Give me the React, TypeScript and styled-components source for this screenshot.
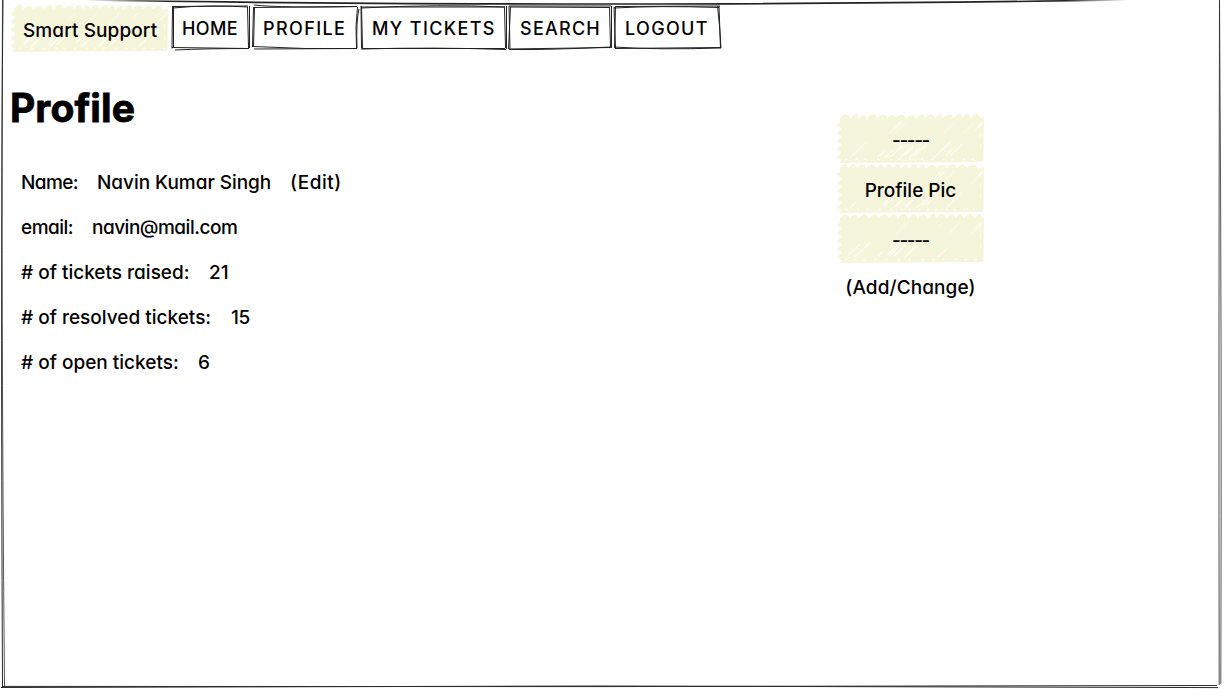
import React from 'react';
import styled, { createGlobalStyle } from 'styled-components';

const GlobalStyle = createGlobalStyle`
  * { box-sizing: border-box; }
  body {
    margin: 0;
    background: #fff;
    color: #000;
    font-family: Inter, "Liberation Sans", sans-serif;
    font-feature-settings: "cv11" 1, "ss03" 1;
    font-size: 19px;
    font-weight: 500;
  }
`;

const Page = styled.div`
  position: relative;
  width: 1229px;
  height: 696px;
  overflow: hidden;
  padding: 5px 0 0 10px;
`;

const Frame = styled.svg`
  position: absolute;
  inset: 0;
  pointer-events: none;
`;

const Sketch = styled.svg`
  position: absolute;
  left: 0;
  top: 0;
  overflow: visible;
`;

const Nav = styled.nav`
  display: flex;
  height: 46px;
`;

const Brand = styled.div`
  position: relative;
  width: 158px;
  padding-left: 13px;
  line-height: 51px;
  margin-right: 3px;
`;

const NavItem = styled.a<{ $w: number; $pad?: number }>`
  position: relative;
  width: ${p => p.$w}px;
  padding-left: ${p => p.$pad ?? 11}px;
  line-height: 47px;
  font-size: 18px;
`;

const Label = styled.span<{ $ls?: number }>`
  position: relative;
  white-space: pre;
  letter-spacing: ${p => p.$ls ?? 0}px;
`;

const Main = styled.main`
  display: flex;
`;

const Details = styled.section`
  width: 826px;
`;

const Title = styled.h1`
  margin: 32px 0 27px;
  font-size: 39px;
  line-height: 50px;
  height: 50px;
  font-weight: 700;
  -webkit-text-stroke: 0.8px #000;
`;

const Row = styled.div`
  display: flex;
  height: 45px;
  line-height: 45px;
  padding-left: 11px;
`;

const Cell = styled.div<{ $w: number }>`
  width: ${p => p.$w}px;
  flex: none;
`;

const Picture = styled.aside`
  width: 149px;
  padding-top: 63px;
  text-align: center;
`;

const Block = styled.div`
  position: relative;
  height: 50px;
  line-height: 53px;
`;

const Action = styled.div`
  line-height: 47px;
`;

function hatch(w: number, h: number, seed: number) {
  let s = seed;
  const rnd = () => {
    s = (s * 16807) % 2147483647;
    return s / 2147483647;
  };
  for (let i = 0; i < 5; i++) rnd();
  let outline = 'M4 4';
  let x = 4;
  while (x < w - 9) {
    const step = 7 + rnd() * 4;
    outline += ` Q${x + step * 0.7} ${-5 + rnd() * 2} ${x + step} ${4 + rnd()}`;
    x += step;
  }
  outline += ` L${w - 1} 3 L${w - 1.5} ${h - 3} L${w - 3} ${h - 1}`;
  outline += ` L3 ${h}`;
  let y = h - 1;
  while (y > 9) {
    outline += ` L${5 + rnd()} ${y - 2} Q-3 ${y - 5} ${4 + rnd()} ${y - 8}`;
    y -= 8;
  }
  outline += ' Z';
  const long: string[] = [];
  for (let i = 0; i < w / 14; i++) {
    const gx = 8 + rnd() * (w - 36);
    const gy = h - 5 - rnd() * 5;
    const l = 4 + rnd() * 14;
    long.push(`M${gx} ${gy} L${gx + l} ${gy - l * 0.95}`);
  }
  const short: string[] = [];
  for (let i = 0; i < w / 24; i++) {
    const gx = w * 0.3 + rnd() * (w * 0.7);
    const l = 5 + rnd() * 9;
    short.push(`M${Math.min(gx, w - l - 2)} ${8 + l} l${l} ${-l}`);
  }
  let notches = '';
  for (let nx = 9; nx < w - 4; nx += 8 + rnd() * 5) notches += `M${nx} ${h - 3} l1.5 -1.8 l1.5 1.8 Z `;
  return { outline, long: long.join(' '), short: short.join(' '), notches };
}

function Scribble({ w, h, seed }: { w: number; h: number; seed: number }) {
  const { outline, long, short, notches } = hatch(w, h, seed);
  return (
    <Sketch width={w} height={h}>
      <path d={outline} fill="#f5f5dc" />
      <path d={long} stroke="#fff" strokeWidth="1.1" strokeOpacity=".75" strokeLinecap="round" fill="none" />
      <path d={short} stroke="#fff" strokeWidth="1" strokeOpacity=".55" strokeLinecap="round" fill="none" />
      <path d={notches} fill="#fff" />
      <path d={`M${w - 5} 8 L${w - 4} ${h - 8}`} stroke="#fff" strokeWidth=".6" strokeDasharray="5 6" />
    </Sketch>
  );
}

const items = [
  { text: 'HOME', w: 81, ls: 0.4, pad: 11, d: 'M1.5 1 L1 43.5 M2.5 2 L2.5 42 M2 3 Q38 -.5 77 2 M1 1.5 L77 1 M78.5 1 L78.5 43 M76.5 2 L77.5 43 M1 42.5 L78 43.5 M4 45 Q35 43.5 78 43.5' },
  { text: 'PROFILE', w: 108, ls: 1.4, pad: 11, d: 'M1.5 2 L.5 42 M2.5 2 L1.5 42 M2 0 Q30 3 105 1.5 M2 2.5 L105 1.5 M105.5 2 Q103 21 104.5 43 M107 4 Q104 16 105 43 M1 41.5 Q54 44.5 105 43.5 M2 44 L105 43.5' },
  { text: 'MY TICKETS', w: 148, ls: 1.35, pad: 12, d: 'M1 1 L1.5 43 M1.5 1 L2.5 43 M1 3 Q80 -1 145 2 M1 2 L145 2 M146.5 1 L146.5 44 M144.5 2 L145.5 43 M1 44 Q75 42 146 44.5 M2 43.5 L145 43.5' },
  { text: 'SEARCH', w: 105, ls: 1.25, pad: 12, d: 'M1 1 L2 44 M2.5 2 L.5 44 M1 1 L103 1 M2 2 L102 2.5 M103.5 1 L103.5 43 M101.5 2 L102.5 43 M1 44.5 Q40 45 103 42 M1 44 L103 42.5' },
  { text: 'LOGOUT', w: 110, ls: 1.35, pad: 12, d: 'M2.5 1 L1.5 43 M1 2 L2.5 43 M2 1.5 L107 1 M1 3 Q45 .5 106 2.5 M104.5 1 Q107 22 108 43 M106 1 L107.5 43 M1 42 Q45 45 108 43 M2 43.5 L108 42.5' },
];

const rows = [
  { label: 'Name:', w: 76, value: 'Navin Kumar Singh', vw: 193, l: -0.6, v: -0.04, extra: '(Edit)' },
  { label: 'email:', w: 71, value: 'navin@mail.com', vw: 160, l: -0.5, v: -0.5 },
  { label: '# of tickets raised:', w: 188, value: '21', vw: 40, l: 0, v: 0 },
  { label: '# of resolved tickets:', w: 210, value: '15', vw: 40, l: 0, v: -0.4 },
  { label: '# of open tickets:', w: 177, value: '6', vw: 40, l: 0, v: 0 },
];

export default function App() {
  return (
    <Page>
      <GlobalStyle />
      <Frame width="1229" height="696" fill="none" stroke="#2b2b2b">
        <defs>
          <linearGradient id="ink" gradientUnits="userSpaceOnUse" x1="85" y1="0" x2="1127" y2="0">
            <stop offset="0" stopColor="#222" stopOpacity="0" />
            <stop offset=".08" stopColor="#222" />
            <stop offset=".94" stopColor="#222" />
            <stop offset="1" stopColor="#222" stopOpacity="0" />
          </linearGradient>
        </defs>
        <path d="M85 0 Q300 3.8 620 4 Q900 3.5 1127 0" stroke="url(#ink)" strokeWidth="1.7" />
        <path d="M3 0 Q.5 250 2.5 687" strokeWidth="1" />
        <path d="M2.5 0 Q1 300 4.5 687" strokeWidth=".8" />
        <path d="M1219.5 0 Q1218.6 350 1219.2 685" strokeWidth="1" strokeOpacity=".85" />
        <path d="M1219.5 0 Q1222 350 1220.8 684" strokeWidth="1" strokeOpacity=".8" />
        <path d="M1 687.5 L600 686 L1218 687.6" strokeWidth="1" />
        <path d="M3 686.4 L600 686.6 L1217 685.5" strokeWidth="1" />
      </Frame>
      <Nav>
        <Brand>
          <Scribble w={159} h={47} seed={7123} />
          <Label $ls={0.1}>Smart Support</Label>
        </Brand>
        {items.map(i => (
          <NavItem key={i.text} $w={i.w} $pad={i.pad}>
            <Sketch width={i.w} height="46" fill="none" stroke="#222" strokeWidth="1">
              <path d={i.d} />
            </Sketch>
            <Label $ls={i.ls}>{i.text}</Label>
          </NavItem>
        ))}
      </Nav>
      <Main>
        <Details>
          <Title><Label $ls={0.1}>Profile</Label></Title>
          {rows.map(r => (
            <Row key={r.label}>
              <Cell $w={r.w}><Label $ls={r.l}>{r.label}</Label></Cell>
              <Cell $w={r.vw}><Label $ls={r.v}>{r.value}</Label></Cell>
              {r.extra && <Label $ls={0.55}>{r.extra}</Label>}
            </Row>
          ))}
        </Details>
        <Picture>
          {['-----', 'Profile Pic', '-----'].map((t, i) => (
            <Block key={i}>
              <Scribble w={149} h={49} seed={1009 + i * 3701} />
              <Label $ls={t[0] === '-' ? -1.4 : 0}>{t}</Label>
            </Block>
          ))}
          <Action><Label $ls={0.1}>(Add/Change)</Label></Action>
        </Picture>
      </Main>
    </Page>
  );
}
